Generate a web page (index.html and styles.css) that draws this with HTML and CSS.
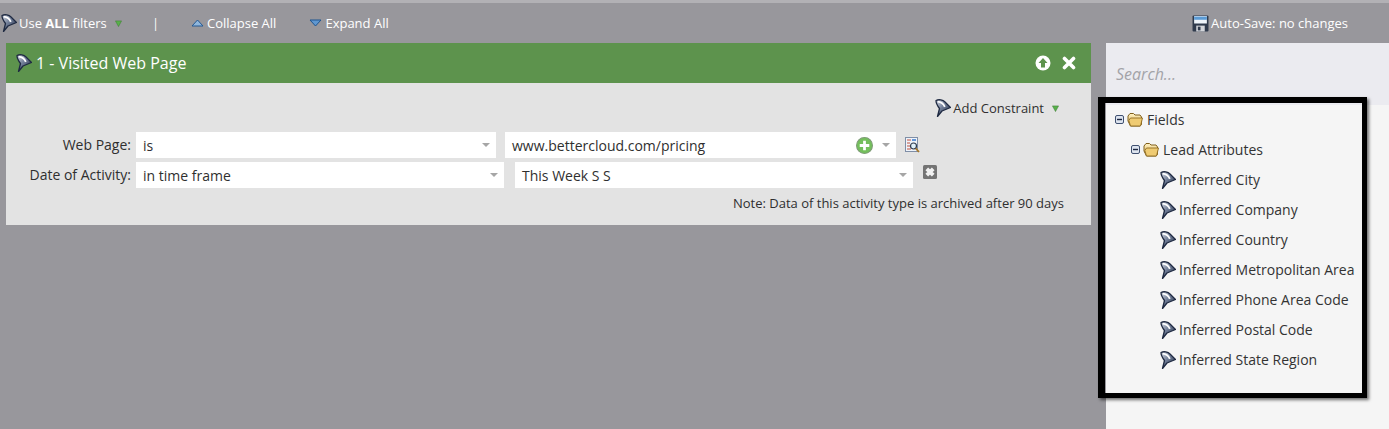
FILE: index.html
```html
<!DOCTYPE html>
<html lang="en">
<head>
<meta charset="utf-8">
<title>Smart List</title>
<link rel="stylesheet" href="styles.css">
</head>
<body>
<svg class="defs" width="0" height="0" aria-hidden="true">
  <defs>
    <linearGradient id="fg" x1="0" y1="0" x2="1" y2="1">
      <stop offset="0" stop-color="#d9dee8"/>
      <stop offset=".45" stop-color="#6f7c96"/>
      <stop offset="1" stop-color="#1f2a42"/>
    </linearGradient>
    <linearGradient id="fold" x1="0" y1="0" x2="0" y2="1">
      <stop offset="0" stop-color="#fff3c4"/>
      <stop offset="1" stop-color="#deb055"/>
    </linearGradient>
    <symbol id="funnel" viewBox="0 0 16 18">
      <path d="M1 1.500C4 0 8 1 10 3l5.500 5.500L7 12 2.500 17.500l2-8Q1 5 1 1.500z" fill="url(#fg)" stroke="#1f2a42" stroke-width="1.300" stroke-linejoin="round"/>
      <path d="M3 2.600C6 3 8.500 4.800 9.800 7.800" fill="none" stroke="#fff" stroke-width="1.800"/>
    </symbol>
    <symbol id="folder" viewBox="0 0 16 15">
      <path d="M1 4 3 1.500h3.500L8 3h5l1.500 2v7.500l-1.500 1.500H3.500L1 9z" fill="url(#fold)" stroke="#7f5e1a"/>
      <path d="M3.500 6H15.500l-2 8H3.500L1.800 8.500z" fill="#efcb72" stroke="#8f6c22" stroke-width=".9"/>
    </symbol>
    <symbol id="minus" viewBox="0 0 9 9">
      <rect x=".5" y=".5" width="8" height="8" rx="1.500" fill="#dde4ef" stroke="#3f5070"/>
      <path d="M2 4.500h5" stroke="#1d2740" stroke-width="1.400"/>
    </symbol>
    <symbol id="tri" viewBox="0 0 8 8">
      <path d="M.5 1h7L4 7.500z" fill="#58b04a" stroke="#3d7d34" stroke-width=".6"/>
    </symbol>
  </defs>
</svg>

<div class="strip"></div>
<header class="toolbar">
  <div class="tool tool-filter">
    <svg class="ic-funnel"><use href="#funnel"/></svg>
    <span>Use <b>ALL</b> filters</span>
    <svg class="ic-tri"><use href="#tri"/></svg>
  </div>
  <span class="sep">|</span>
  <div class="tool tool-collapse">
    <svg class="ic-arrow" viewBox="0 0 13 8"><path d="M6.500 1 12 7H1z" fill="#8fb6dc" stroke="#245a94"/></svg>
    <span>Collapse All</span>
  </div>
  <div class="tool tool-expand">
    <svg class="ic-arrow" viewBox="0 0 13 8"><path d="M6.500 7 12 1H1z" fill="#5f97d0" stroke="#1f5590"/></svg>
    <span>Expand All</span>
  </div>
  <div class="tool tool-save">
    <svg class="ic-save" viewBox="0 0 16 16">
      <rect x=".5" y=".5" width="15" height="15" rx="1" fill="#2f3a4c"/>
      <rect x="2" y="1" width="12" height="7" fill="#eef4fa"/>
      <rect x="2" y="1.500" width="12" height="3" fill="#5b9bd5"/>
      <rect x="4" y="10" width="8" height="5.500" fill="#d4d6db"/>
      <rect x="5.500" y="11" width="2.500" height="3.500" fill="#2f3a4c"/>
    </svg>
    <span>Auto-Save: no changes</span>
  </div>
</header>

<div class="layout">
  <main class="main">
    <section class="card">
      <div class="card-head">
        <svg class="ic-funnel head-funnel"><use href="#funnel"/></svg>
        <h2 class="card-title">1 - Visited Web Page</h2>
        <svg class="ic-up" viewBox="0 0 16 16">
          <circle cx="8" cy="8" r="7.500" fill="#fff"/>
          <path d="M8 3 12.500 8H10v4.500H6V8H3.500z" fill="#5d934d"/>
        </svg>
        <svg class="ic-x" viewBox="0 0 14 14"><path d="M2.500 2.500l9 9M11.500 2.500l-9 9" stroke="#fff" stroke-width="3.600" stroke-linecap="round"/></svg>
      </div>
      <div class="card-body">
        <div class="constraint">
          <svg class="ic-funnel"><use href="#funnel"/></svg>
          <span>Add Constraint</span>
          <svg class="ic-tri"><use href="#tri"/></svg>
        </div>
        <div class="row row-first">
          <label class="label">Web Page:</label>
          <div class="select op"><span>is</span><i class="caret"></i></div>
          <div class="select val val-1">
            <span>www.bettercloud.com/pricing</span>
            <svg class="ic-plus" viewBox="0 0 16 16">
              <circle cx="8" cy="8" r="7.500" fill="#74bf5c" stroke="#7f9c78"/>
              <path d="M8 3.500v9M3.500 8h9" stroke="#fff" stroke-width="2.600"/>
            </svg>
            <i class="caret"></i>
          </div>
          <svg class="ic-lookup" viewBox="0 0 15 16">
            <rect x=".5" y=".5" width="12" height="14" fill="#eef3fa" stroke="#7f8ea6"/>
            <path d="M2 3h4M2 6h3M2 9h3M2 12h4" stroke="#c0503c" stroke-width="1.200"/>
            <path d="M7 3h4" stroke="#3f7fd0" stroke-width="1.600"/>
            <circle cx="8.500" cy="9" r="3" fill="#dff0fa" stroke="#2f3a4c" stroke-width="1.200"/>
            <path d="M10.800 11.300 14 15" stroke="#a6782c" stroke-width="1.800"/>
          </svg>
        </div>
        <div class="row">
          <label class="label">Date of Activity:</label>
          <div class="select op op-2"><span>in time frame</span><i class="caret"></i></div>
          <div class="select val val-2"><span>This Week S S</span><i class="caret"></i></div>
          <svg class="ic-clear" viewBox="0 0 14 14">
            <rect width="14" height="14" rx="1.500" fill="#747474"/>
            <path d="M3.800 3.800l6.400 6.400M10.200 3.800l-6.400 6.400" stroke="#f2f2f2" stroke-width="3.800"/>
          </svg>
        </div>
        <p class="note">Note: Data of this activity type is archived after 90 days</p>
      </div>
    </section>
  </main>

  <aside class="panel">
    <div class="search">Search...</div>
    <ul class="tree">
      <li class="node lvl-0"><svg class="ic-minus"><use href="#minus"/></svg><svg class="ic-folder"><use href="#folder"/></svg><span>Fields</span></li>
      <li class="node lvl-1"><svg class="ic-minus"><use href="#minus"/></svg><svg class="ic-folder"><use href="#folder"/></svg><span>Lead Attributes</span></li>
      <li class="node lvl-2"><svg class="ic-funnel"><use href="#funnel"/></svg><span>Inferred City</span></li>
      <li class="node lvl-2"><svg class="ic-funnel"><use href="#funnel"/></svg><span>Inferred Company</span></li>
      <li class="node lvl-2"><svg class="ic-funnel"><use href="#funnel"/></svg><span>Inferred Country</span></li>
      <li class="node lvl-2"><svg class="ic-funnel"><use href="#funnel"/></svg><span>Inferred Metropolitan Area</span></li>
      <li class="node lvl-2"><svg class="ic-funnel"><use href="#funnel"/></svg><span>Inferred Phone Area Code</span></li>
      <li class="node lvl-2"><svg class="ic-funnel"><use href="#funnel"/></svg><span>Inferred Postal Code</span></li>
      <li class="node lvl-2"><svg class="ic-funnel"><use href="#funnel"/></svg><span>Inferred State Region</span></li>
    </ul>
    <div class="callout"></div>
  </aside>
</div>
</body>
</html>
```

FILE: styles.css
```css
* { box-sizing: border-box; }
html, body { height: 100%; }
body {
  margin: 0;
  display: flex;
  flex-direction: column;
  overflow: hidden;
  background: #98979c;
  font-family: "Open Sans", "Liberation Sans", sans-serif;
  font-size: 13px;
  color: #2f2f2f;
}
.defs { position: absolute; }
svg { display: block; flex: none; }

.strip { height: 3px; background: #b2b1b5; }

.toolbar {
  height: 40px;
  display: flex;
  align-items: center;
  color: #fff;
  font-size: 13px;
}
.tool { display: flex; align-items: center; }
.tool-filter { width: 124px; margin-left: 1px; gap: 2px; }
.tool-filter .ic-tri { margin-left: 6px; }
.sep { width: 7px; margin-left: 27px; font-size: 12px; text-align: center; }
.tool-collapse { margin-left: 32px; gap: 3px; }
.tool-expand { margin-left: 33px; gap: 3px; }
.tool-save { margin-left: auto; margin-right: 41px; gap: 2px; }

.ic-funnel { width: 16px; height: 18px; }
.ic-tri { width: 7px; height: 7px; }
.ic-arrow { width: 13px; height: 8px; }
.ic-save { width: 17px; height: 17px; }

.layout { flex: 1; display: flex; min-height: 0; }
.main { width: 1106px; padding-left: 6px; }

.card { width: 1085px; }
.card-head {
  height: 40px;
  background: #5d934d;
  color: #fff;
  display: flex;
  align-items: center;
  padding: 0 15px 0 10px;
}
.head-funnel { margin-right: 4px; }
.card-title { margin: 0; font-size: 16px; font-weight: 400; flex: 1; }
.ic-up { width: 16px; height: 16px; margin-right: 11px; }
.ic-x { width: 14px; height: 14px; }

.card-body { height: 142px; background: #e3e3e3; padding-top: 16px; }
.constraint {
  display: flex;
  align-items: center;
  justify-content: flex-end;
  gap: 2px;
  height: 18px;
  padding-right: 32px;
}
.constraint .ic-tri { margin-left: 6px; }

.row { display: flex; align-items: flex-start; height: 26px; margin-top: 4px; }
.row-first { margin-top: 15px; }
.label { width: 125px; text-align: right; line-height: 26px; margin-right: 5px; font-size: 14px; }
.select {
  height: 26px;
  background: #fff;
  display: flex;
  align-items: center;
  padding: 0 0 0 7px;
  font-size: 14px;
}
.select span { flex: 1; }
.op { width: 360px; }
.op-2 { width: 368px; }
.val { margin-left: 9px; }
.val-1 { width: 391px; }
.val-2 { width: 398px; margin-left: 11px; }
.caret {
  width: 0;
  height: 0;
  margin-right: 6px;
  margin-left: 6px;
  border: 4px solid transparent;
  border-top: 4px solid #a6a6a6;
  border-bottom: 0;
}
.ic-plus { width: 17px; height: 17px; margin-right: 3px; }
.ic-lookup { width: 15px; height: 16px; margin: 5px 0 0 9px; }
.ic-clear { width: 14px; height: 14px; margin: 3px 0 0 10px; }
.note { margin: 8px 27px 0 0; text-align: right; font-size: 13px; line-height: 14px; }

.panel { flex: 1; background: #f5f5f5; position: relative; }
.search {
  height: 62px;
  background: #ebebf0;
  color: #a3a3a8;
  font-style: italic;
  font-size: 16px;
  line-height: 62px;
  padding-left: 10px;
}
.tree { list-style: none; margin: -1px 0 0; padding: 0; }
.node { height: 30px; display: flex; align-items: center; font-size: 14px; color: #333; }
.lvl-0 { padding-left: 9px; }
.lvl-1 { padding-left: 25px; }
.lvl-2 { padding-left: 54px; gap: 3px; }
.lvl-2 .ic-funnel { margin-top: 2px; }
.ic-minus { width: 9px; height: 9px; margin-right: 3px; }
.ic-folder { width: 16px; height: 15px; margin-right: 4px; }

.callout {
  position: absolute;
  left: -8px;
  top: 54px;
  width: 269px;
  height: 301px;
  border-style: solid;
  border-color: #000;
  border-width: 6px 5px 5px 7px;
  box-shadow: 2px 2px 3px rgba(0, 0, 0, .55);
  pointer-events: none;
}
```
